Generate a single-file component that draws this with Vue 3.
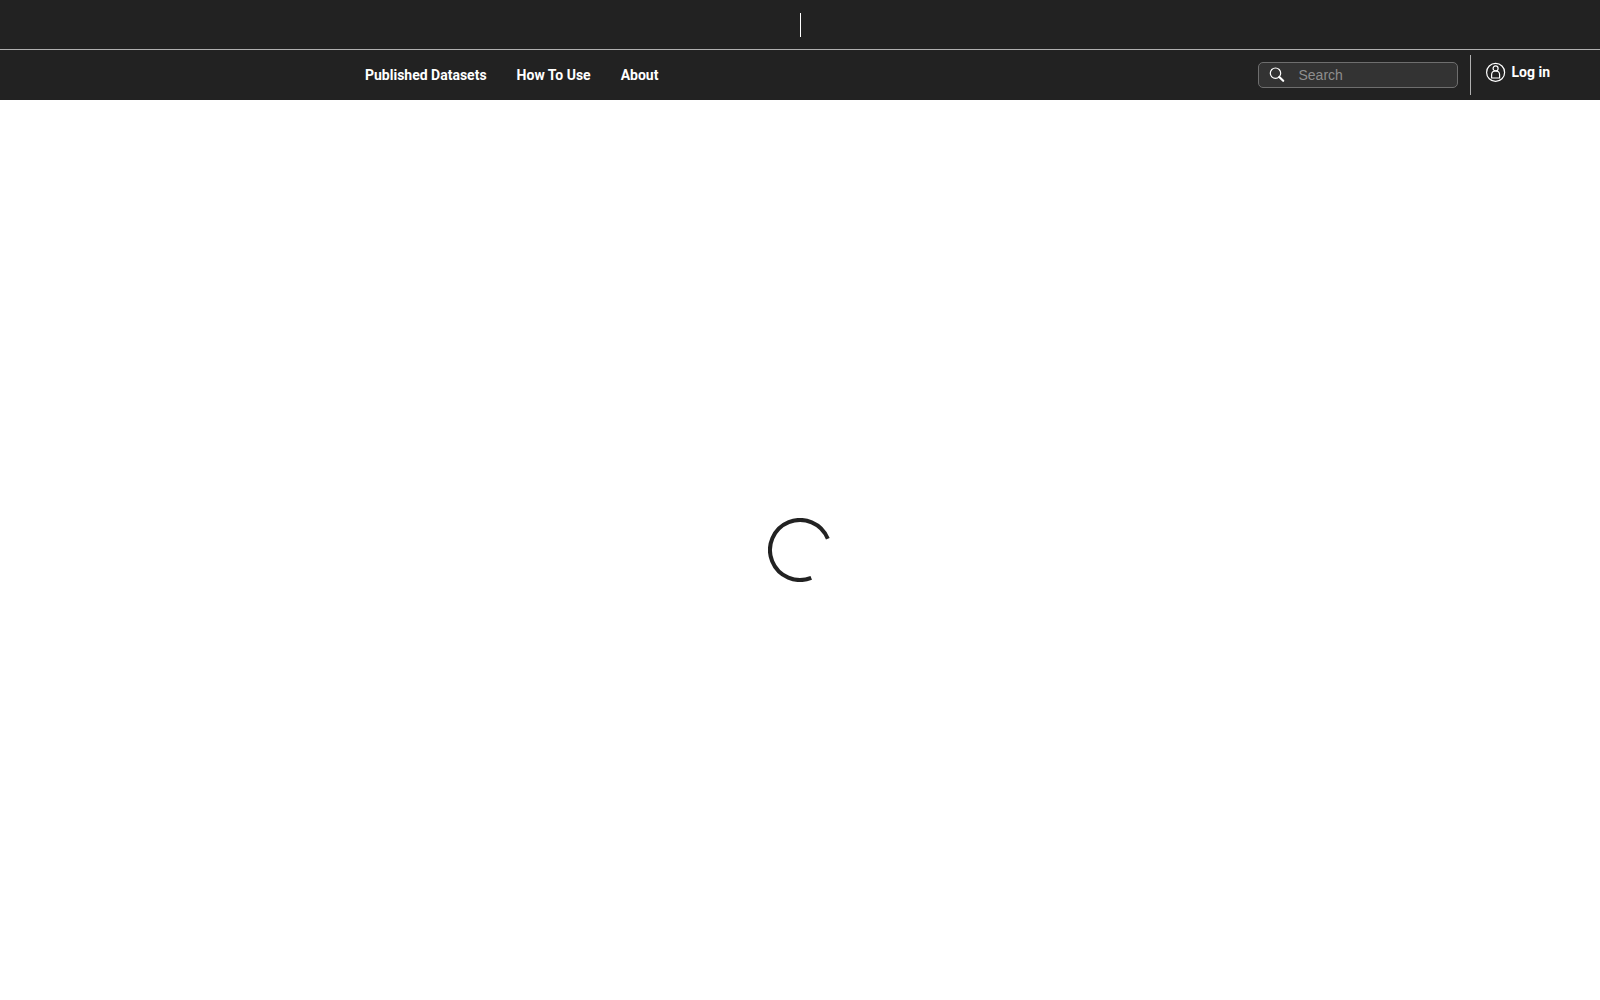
<script setup>
import { ref } from 'vue'

const keyword = ref('')
const links = ['Published Datasets', 'How To Use', 'About']
</script>

<template>
    <div class="page">
        <header>
            <div class="topbar">
                <span class="separator"></span>
            </div>

            <div class="navbar">
                <nav>
                    <a v-for="item in links" :key="item" href="#">{{ item }}</a>
                </nav>

                <div class="tools">
                    <form class="search" role="search" @submit.prevent>
                        <svg viewBox="0 0 16 16" aria-hidden="true">
                            <circle cx="6.5" cy="6.2" r="5.2" fill="none" stroke="#fff" stroke-width="1.2" />
                            <path d="M10.3 10 L14.2 13.8" fill="none" stroke="#fff" stroke-width="2.2" stroke-linecap="round" />
                        </svg>
                        <input v-model="keyword" type="text" placeholder="Search" aria-label="Search">
                    </form>

                    <div class="account">
                        <a href="#">
                            <svg viewBox="0 0 20 20" fill="none" stroke="#fff" stroke-width="1.2" aria-hidden="true">
                                <circle cx="9.6" cy="10.4" r="9" />
                                <circle cx="9.6" cy="6.4" r="2.5" />
                                <path d="M5.6 16 V12.8 C5.6 10.4 7.2 9 9.6 9 S13.6 10.4 13.6 12.8 V16 Z" stroke-linejoin="round" />
                            </svg>
                            Log in
                        </a>
                    </div>
                </div>
            </div>
        </header>

        <main>
            <svg class="spinner" viewBox="0 0 64 64" role="img" aria-label="Loading">
                <circle cx="32" cy="32" r="30" pathLength="360" transform="rotate(68 32 32)" />
            </svg>
        </main>
    </div>
</template>

<style>
body {
    margin: 0;
    background: #fff;
}
</style>

<style scoped>
.page {
    display: flex;
    flex-direction: column;
    min-height: 100vh;
    font-family: Roboto, "Liberation Sans", sans-serif;
    font-size: 14px;
    line-height: 20px;
}

header {
    background: #222;
    color: #fff;
}

a {
    color: #fff;
    font-weight: 700;
    text-decoration: none;
}

.topbar {
    display: flex;
    justify-content: center;
    align-items: center;
    height: 49px;
    border-bottom: 1px solid #b0b0b0;
}

.separator {
    width: 1px;
    height: 24px;
    background: #fff;
}

.navbar {
    display: flex;
    justify-content: space-between;
    align-items: center;
    height: 50px;
    padding: 0 50px 0 365px;
}

nav {
    display: flex;
    gap: 30px;
}

.tools {
    display: flex;
    align-items: center;
    gap: 12px;
}

.search {
    display: flex;
    align-items: center;
    gap: 12px;
    box-sizing: border-box;
    width: 200px;
    height: 26px;
    padding: 0 10px;
    border: 1px solid #6e6e6e;
    border-radius: 5px;
    background: #333;
}

.search svg {
    flex: none;
    width: 16px;
    height: 16px;
}

.search input {
    flex: 1;
    min-width: 0;
    padding: 0 1px;
    border: 0;
    outline: 0;
    background: transparent;
    color: #fff;
    font-family: "Liberation Sans", Arial, sans-serif;
    font-size: 14px;
}

.search input::placeholder {
    color: #8e8e8e;
}

.account {
    height: 40px;
    padding-left: 15px;
    border-left: 1px solid #b0b0b0;
}

.account a {
    display: flex;
    align-items: center;
    gap: 5px;
    height: 34px;
}

.account svg {
    width: 20px;
    height: 20px;
}

main {
    display: flex;
    flex: 1;
    justify-content: center;
    align-items: center;
}

.spinner {
    width: 64px;
    height: 64px;
}

.spinner circle {
    fill: none;
    stroke: #222;
    stroke-width: 4;
    stroke-dasharray: 270 90;
}
</style>
